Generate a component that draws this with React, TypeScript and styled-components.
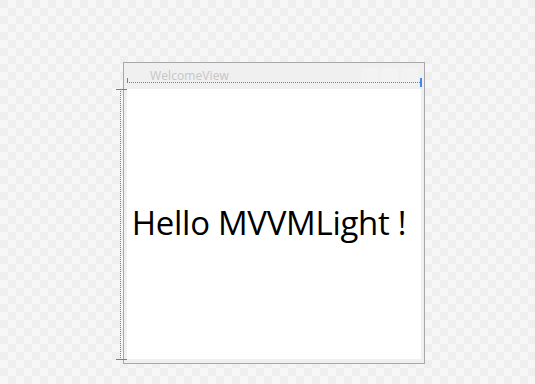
import React from "react";
import styled, { createGlobalStyle } from "styled-components";

const Global = createGlobalStyle`
  html, body { margin: 0; padding: 0; }
  body {
    width: 535px;
    height: 384px;
    overflow: hidden;
    background-color: #f7f7f7;
    background-image:
      linear-gradient(45deg, #efefef 25%, transparent 25%, transparent 75%, #efefef 75%),
      linear-gradient(45deg, #efefef 25%, transparent 25%, transparent 75%, #efefef 75%);
    background-size: 16px 16px;
    background-position: 8px 0, 0 8px;
    font-family: "Open Sans", "Noto Sans", sans-serif;
  }
`;

const Canvas = styled.div`
  position: relative;
  width: 535px;
  height: 384px;
  padding: 62px 0 0 123px;
  box-sizing: border-box;
`;

const Frame = styled.div`
  width: 302px;
  height: 302px;
  box-sizing: border-box;
  border: 1px solid #a8a8a8;
  background: #f0f0f0;
  display: flex;
  flex-direction: column;
  padding: 0 3px 4px 3px;
`;

const Header = styled.div`
  height: 26px;
  display: flex;
  align-items: flex-start;
  position: relative;
`;

const Title = styled.span`
  margin: 6px 0 0 23px;
  font-size: 12px;
  line-height: 14px;
  letter-spacing: 0.1px;
  color: #c6c6c6;
  font-family: "Open Sans", sans-serif;
`;

const HeaderButtons = styled.div`
  margin-left: auto;
  margin-top: 5px;
  margin-right: 3px;
  display: flex;
  gap: 3px;
`;

const HeaderButton = styled.div`
  width: 17px;
  height: 18px;
  border-radius: 3px;
  background: #f3f3f3;
`;

const Content = styled.div`
  flex: 1;
  background: #ffffff;
  display: flex;
  align-items: center;
  justify-content: center;
`;

const Hello = styled.div`
  font-family: "Open Sans", "Noto Sans", sans-serif;
  font-size: 33px;
  letter-spacing: -0.3px;
  color: #000;
  margin-left: -10px;
  margin-top: -3px;
  white-space: nowrap;
`;

const Guide = styled.div<{ $x: number; $y: number; $w: number; $h: number }>`
  position: absolute;
  left: ${(p) => p.$x}px;
  top: ${(p) => p.$y}px;
  width: ${(p) => p.$w}px;
  height: ${(p) => p.$h}px;
  background: #3f86f7;
`;

const DottedH = styled.div<{ $x: number; $y: number; $w: number }>`
  position: absolute;
  left: ${(p) => p.$x}px;
  top: ${(p) => p.$y}px;
  width: ${(p) => p.$w}px;
  height: 1px;
  background: repeating-linear-gradient(to right, #3f86f7 0 1px, transparent 1px 2px);
`;

const DottedV = styled.div<{ $x: number; $y: number; $h: number }>`
  position: absolute;
  left: ${(p) => p.$x}px;
  top: ${(p) => p.$y}px;
  height: ${(p) => p.$h}px;
  width: 1px;
  background: repeating-linear-gradient(to bottom, #3f86f7 0 1px, transparent 1px 2px);
`;

export default function App() {
  return (
    <>
      <Global />
      <Canvas>
        <Frame>
          <Header>
            <Title>WelcomeView</Title>
            <HeaderButtons>
              <HeaderButton />
              <HeaderButton />
              <HeaderButton />
            </HeaderButtons>
          </Header>
          <Content>
            <Hello>Hello MVVMLight !</Hello>
          </Content>
        </Frame>
        <DottedH $x={127} $y={82} $w={293} />
        <Guide $x={127} $y={78} $w={1} $h={5} />
        <Guide $x={420} $y={78} $w={2} $h={9} />
        <DottedV $x={120} $y={89} $h={270} />
        <Guide $x={116} $y={89} $w={11} $h={1} />
        <Guide $x={116} $y={359} $w={11} $h={1} />
      </Canvas>
    </>
  );
}
